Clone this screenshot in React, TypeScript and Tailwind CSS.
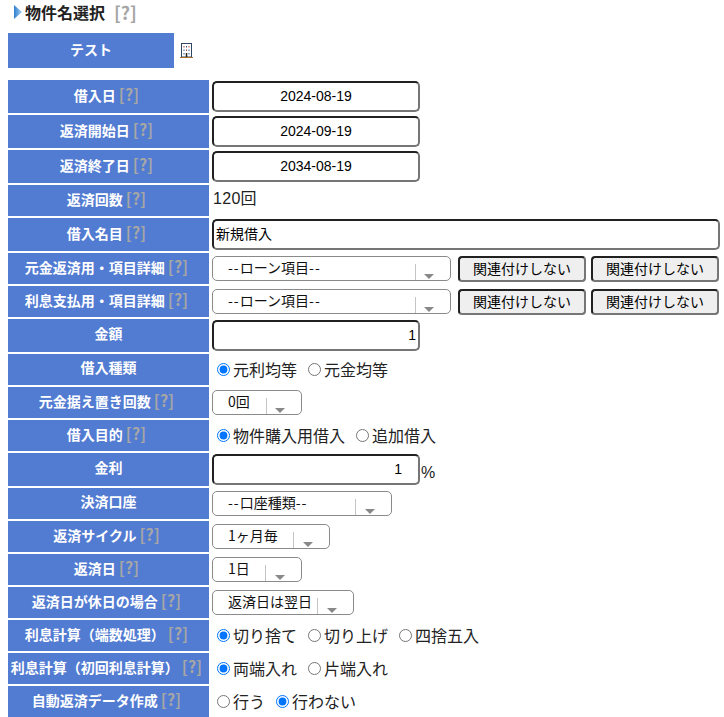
import React from "react";

function Help() {
  return <span className="ml-[3px] text-[#a6a6a6] font-bold text-[16px]">[?]</span>;
}

function Row({ label, help = true, h, children }: { label: string; help?: boolean; h: string; children: React.ReactNode }) {
  return (
    <div className={`flex gap-[3px] ${h}`}>
      <div className="w-[201px] shrink-0 bg-[#527bd2] flex items-center justify-center text-white font-bold text-[14px] leading-none whitespace-nowrap pb-[6px]">
        <span className={help ? "pr-[4px]" : ""}>{label}{help && <Help />}</span>
      </div>
      <div className="flex-1 min-w-0 flex items-center">{children}</div>
    </div>
  );
}

function TextBox({ value, w, align }: { value: string; w: string; align: string }) {
  return (
    <input
      readOnly
      value={value}
      className={`${w} ${align} h-[31px] bg-white rounded-[5px] border-2 border-t-[#212121] border-l-[#212121] border-r-[#767676] border-b-[#767676] px-[2px] pb-[2px] text-[14px] text-black outline-none`}
      style={{ fontFamily: '"Liberation Sans", "Noto Sans CJK JP", sans-serif' }}
    />
  );
}

function Dash() {
  return <span className="tracking-[1px]">--</span>;
}

function Sel({ text, w, divider, dashed }: { text: string; w: string; divider: string; dashed?: boolean }) {
  return (
    <div className={`${w} h-[25px] bg-white rounded-[5px] border border-[#8a8a8a] flex items-center pl-[15px] text-[14px] text-[#111] relative shrink-0`}>
      <span className="whitespace-nowrap leading-none -mt-[3px]">
        {dashed && <Dash />}
        {text}
        {dashed && <Dash />}
      </span>
      <span className={`absolute bottom-0 top-[7px] w-px bg-[#c4c4c4] ${divider}`} />
      <span className="absolute top-[17px] right-[16px] w-0 h-0 border-l-[5px] border-r-[5px] border-t-[5px] border-l-transparent border-r-transparent border-t-[#888]" />
    </div>
  );
}

function Btn() {
  return (
    <button className="w-[128px] h-[26px] shrink-0 bg-[#efefef] rounded-[4px] border-2 border-t-[#212121] border-l-[#212121] border-r-[#767676] border-b-[#767676] text-[14px] leading-none text-black whitespace-nowrap pb-[2px]">
      関連付けしない
    </button>
  );
}

function Radios({ items }: { items: { t: string; on?: boolean }[] }) {
  return (
    <div className="flex items-center pl-[5px] gap-[11px] text-[16px] text-[#222] leading-none pb-[1px]">
      {items.map((i) => (
        <label key={i.t} className="flex items-center gap-[3px] whitespace-nowrap">
          <input type="radio" readOnly checked={!!i.on} className="w-[13px] h-[13px] m-0 accent-[#0075ff]" />
          <span>{i.t}</span>
        </label>
      ))}
    </div>
  );
}

export default function App() {
  return (
    <div className="w-[724px] h-[717px] overflow-hidden bg-white pl-[8px] pr-[4px]" style={{ fontFamily: '"Noto Sans CJK JP", "Liberation Sans", sans-serif' }}>
      <div className="h-[33px] flex items-center pl-[6px] pb-[10px] font-bold text-[16px] text-[#222] leading-none">
        <svg width="8" height="14" viewBox="0 0 8 14" className="mr-[3px]">
          <defs>
            <linearGradient id="g" x1="0" x2="1" y1="0" y2="0">
              <stop offset="0" stopColor="#2f7fd0" />
              <stop offset="1" stopColor="#a5d2f2" />
            </linearGradient>
          </defs>
          <polygon points="0,0 8,7 0,14" fill="url(#g)" />
        </svg>
        <span>物件名選択</span>
        <span className="ml-[9px] text-[#a6a6a6] text-[18px]">[?]</span>
      </div>
      <div className="h-[35px] flex items-center mb-[12px]">
        <div className="w-[166px] h-full bg-[#527bd2] flex items-center justify-center text-white font-bold text-[14px] leading-none pb-[4px]">テスト</div>
        <svg width="13" height="15" viewBox="0 0 13 15" className="ml-[6px] -mt-[1px]" fill="none" strokeWidth="1">
          <rect x="1.5" y="0.5" width="10" height="13.5" stroke="#2f4660" />
          <path d="M0 14.5h13" stroke="#a8702a" />
          <path d="M4 3v1.5M9 3v1.5M6.5 6.5v1.5" stroke="#b04a3a" />
          <path d="M6.5 3v1.5M4 6.5v1.5M9 6.5v1.5M4 10v1.5M9 10v1.5" stroke="#2f5f9a" />
          <path d="M6.5 10v4" stroke="#222222" strokeWidth="1.5" />
        </svg>
      </div>
      <div className="flex flex-col gap-[2px]">
        <Row label="借入日" h="h-[33px]"><TextBox value="2024-08-19" w="w-[208px]" align="text-center" /></Row>
        <Row label="返済開始日" h="h-[33px]"><TextBox value="2024-09-19" w="w-[208px]" align="text-center" /></Row>
        <Row label="返済終了日" h="h-[33px]"><TextBox value="2034-08-19" w="w-[208px]" align="text-center" /></Row>
        <Row label="返済回数" h="h-[31px]"><span className="pl-[1px] pb-[4px] text-[16px] leading-none text-[#222] tracking-[0.3px]" style={{ fontFamily: '"Liberation Sans", "Noto Sans CJK JP", sans-serif' }}>120回</span></Row>
        <Row label="借入名目" h="h-[33px]"><input readOnly value="新規借入" className="w-[508px] h-[31px] bg-white rounded-[5px] border-2 border-t-[#212121] border-l-[#212121] border-r-[#767676] border-b-[#767676] px-[2px] pb-[4px] text-[14px] text-black outline-none" /></Row>
        <Row label="元金返済用・項目詳細" h="h-[31px]">
          <div className="flex items-center gap-[5px] w-full"><Sel dashed text="ローン項目" w="w-[239px]" divider="left-[202px]" /><div className="ml-[2px] flex gap-[5px]"><Btn /><Btn /></div></div>
        </Row>
        <Row label="利息支払用・項目詳細" h="h-[31px]">
          <div className="flex items-center gap-[5px] w-full"><Sel dashed text="ローン項目" w="w-[239px]" divider="left-[202px]" /><div className="ml-[2px] flex gap-[5px]"><Btn /><Btn /></div></div>
        </Row>
        <Row label="金額" help={false} h="h-[33px]"><TextBox value="1" w="w-[208px]" align="text-right" /></Row>
        <Row label="借入種類" help={false} h="h-[31px]"><Radios items={[{ t: "元利均等", on: true }, { t: "元金均等" }]} /></Row>
        <Row label="元金据え置き回数" h="h-[31px]"><Sel text="0回" w="w-[90px]" divider="left-[53px]" /></Row>
        <Row label="借入目的" h="h-[31px]"><Radios items={[{ t: "物件購入用借入", on: true }, { t: "追加借入" }]} /></Row>
        <Row label="金利" help={false} h="h-[33px]">
          <TextBox value="1" w="w-[208px] pr-[16px]" align="text-right" />
          <span className="ml-[1px] mt-[6px] text-[16px] leading-none text-[#222]" style={{ fontFamily: '"Liberation Sans", sans-serif' }}>%</span>
        </Row>
        <Row label="決済口座" help={false} h="h-[31px]"><Sel dashed text="口座種類" w="w-[180px]" divider="left-[142px]" /></Row>
        <Row label="返済サイクル" h="h-[31px]"><Sel text="1ヶ月毎" w="w-[118px]" divider="left-[80px]" /></Row>
        <Row label="返済日" h="h-[31px]"><Sel text="1日" w="w-[90px]" divider="left-[52px]" /></Row>
        <Row label="返済日が休日の場合" h="h-[31px]"><Sel text="返済日は翌日" w="w-[142px]" divider="left-[104px]" /></Row>
        <Row label="利息計算（端数処理）" h="h-[31px]"><Radios items={[{ t: "切り捨て", on: true }, { t: "切り上げ" }, { t: "四捨五入" }]} /></Row>
        <Row label="利息計算（初回利息計算）" h="h-[31px]"><Radios items={[{ t: "両端入れ", on: true }, { t: "片端入れ" }]} /></Row>
        <Row label="自動返済データ作成" h="h-[31px]"><Radios items={[{ t: "行う" }, { t: "行わない", on: true }]} /></Row>
      </div>
    </div>
  );
}
